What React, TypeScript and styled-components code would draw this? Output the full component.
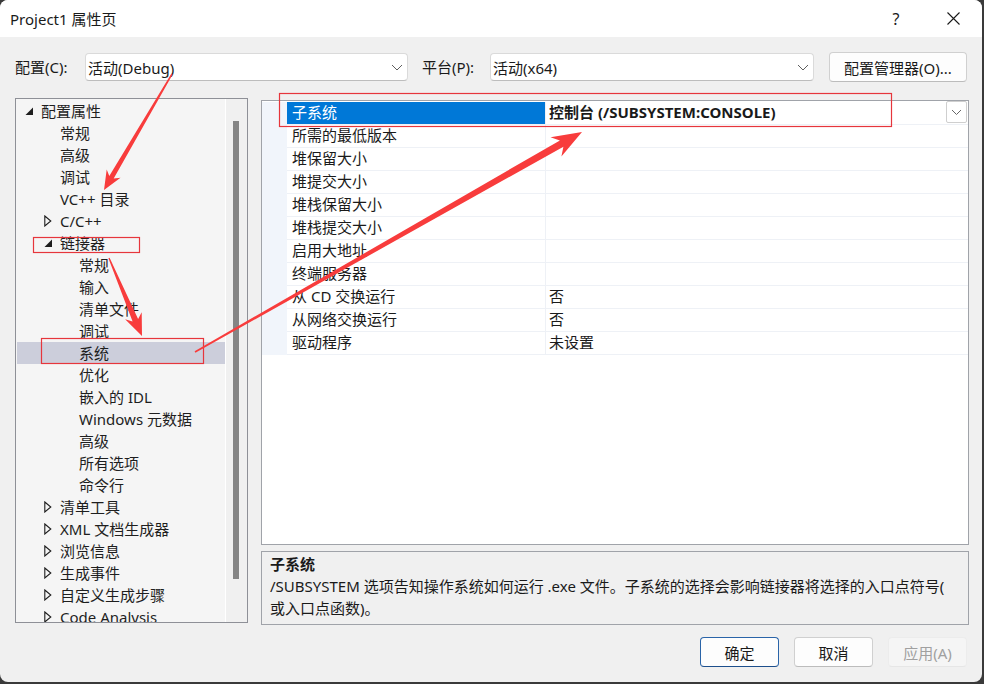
import React from "react";
import styled, { createGlobalStyle } from "styled-components";

const FONT = `"Noto Sans", "Noto Sans CJK SC", sans-serif`;

const Global = createGlobalStyle`
  html, body { margin: 0; padding: 0; background: #3a3a3a; }
  body { font-family: ${FONT}; width: 984px; height: 684px; overflow: hidden; color: #1a1a1a; }
  * { box-sizing: border-box; }
`;

const Window = styled.div`
  position: relative;
  width: 982px;
  height: 682px;
  background: #f0f0f0;
  border-radius: 8px;
  overflow: hidden;
  display: flex;
  flex-direction: column;
  font-size: 15px;
`;

const TitleBar = styled.div`
  height: 37px;
  flex: none;
  background: #ffffff;
  display: flex;
  align-items: center;
  padding-left: 10px;
  padding-right: 6px;
`;

const Title = styled.div`
  font-size: 15px;
  line-height: 20px;
  color: #1a1a1a;
`;

const TitleButtons = styled.div`
  margin-left: auto;
  display: flex;
  gap: 11px;
  height: 100%;
`;

const TitleButton = styled.div`
  width: 46px;
  height: 100%;
  display: flex;
  align-items: center;
  justify-content: center;
  font-size: 16px;
  color: #1a1a1a;
`;

const ConfigRow = styled.div`
  margin-top: 15px;
  height: 30px;
  flex: none;
  display: flex;
  align-items: center;
  padding: 0 15px;
`;

const Label = styled.div<{ $w: number }>`
  width: ${(p) => p.$w}px;
  flex: none;
  font-size: 15px;
  line-height: 20px;
`;

const Combo = styled.div<{ $w: number }>`
  width: ${(p) => p.$w}px;
  height: 28px;
  flex: none;
  background: #ffffff;
  border: 1px solid #dadada;
  border-bottom-color: #bdbdbd;
  border-radius: 4px;
  display: flex;
  align-items: center;
  justify-content: space-between;
  padding: 0 4px 0 2px;
  font-size: 15px;
`;

const Spacer = styled.div<{ $w: number }>`
  width: ${(p) => p.$w}px;
  flex: none;
`;

const Button = styled.div<{ $w: number; $primary?: boolean; $disabled?: boolean }>`
  width: ${(p) => p.$w}px;
  height: 30px;
  flex: none;
  display: flex;
  align-items: center;
  justify-content: center;
  border-radius: 4px;
  font-size: 15px;
  background: ${(p) => (p.$disabled ? "#f5f5f5" : "#fdfdfd")};
  color: ${(p) => (p.$disabled ? "#a0a0a0" : "#1a1a1a")};
  border: 1px solid
    ${(p) => (p.$primary ? "#2a64a8" : p.$disabled ? "#ececec" : "#d0d0d0")};
  border-bottom-color: ${(p) =>
    p.$primary ? "#1d4f8c" : p.$disabled ? "#e6e6e6" : "#bcbcbc"};
`;

const Main = styled.div`
  margin-top: 16px;
  height: 527px;
  flex: none;
  display: flex;
  gap: 13px;
  padding: 0 13px 0 15px;
`;

const TreePanel = styled.div`
  width: 233px;
  height: 525px;
  flex: none;
  border: 1px solid #8e9097;
  background: #f5f5f5;
  display: flex;
`;

const TreeList = styled.div`
  flex: 1;
  padding: 1px 0 0 1px;
  overflow: hidden;
`;

const TreeRow = styled.div<{ $level: number; $selected?: boolean }>`
  height: 22px;
  display: flex;
  align-items: center;
  padding-left: ${(p) => 8 + p.$level * 19}px;
  background: ${(p) => (p.$selected ? "#cccedb" : "transparent")};
  white-space: nowrap;
  font-size: 15px;
  line-height: 22px;
  color: #1e1e1e;
`;

const Expander = styled.div`
  width: 16px;
  height: 22px;
  flex: none;
  display: flex;
  align-items: center;
`;

const ScrollTrack = styled.div`
  width: 22px;
  flex: none;
  border-left: 1px solid #ffffff;
  background: #f0f0f0;
  padding: 22px 0 0 7px;
`;

const Thumb = styled.div`
  width: 6px;
  height: 458px;
  background: #858585;
`;

const RightCol = styled.div`
  flex: 1;
  display: flex;
  flex-direction: column;
  gap: 6px;
  padding-top: 2px;
`;

const GridPanel = styled.div`
  height: 445px;
  flex: none;
  border: 1px solid #a0a3a9;
  background: #ffffff;
  padding-top: 1px;
`;

const GridRow = styled.div`
  display: grid;
  grid-template-columns: 25px 259px 1fr;
  height: 23px;
`;

const Gutter = styled.div`
  background: #f1f5fb;
`;

const NameCell = styled.div<{ $selected?: boolean }>`
  border-bottom: 1px solid #eef1f6;
  border-right: 1px solid #eef1f6;
  padding: 0 0 2px 5px;
  display: flex;
  align-items: center;
  font-size: 15px;
  line-height: 20px;
  white-space: nowrap;
  background: ${(p) => (p.$selected ? "#0078d7" : "#ffffff")};
  color: ${(p) => (p.$selected ? "#ffffff" : "#1a1a1a")};
`;

const ValueCell = styled.div<{ $bold?: boolean }>`
  border-bottom: 1px solid #eef1f6;
  padding-left: 3px;
  display: flex;
  align-items: stretch;
  justify-content: space-between;
  font-size: 15px;
  line-height: 20px;
  white-space: nowrap;
  font-weight: ${(p) => (p.$bold ? 700 : 400)};
  color: #1a1a1a;
`;

const ValueText = styled.span`
  display: flex;
  align-items: center;
  padding-bottom: 2px;
`;

const DropButton = styled.div`
  width: 21px;
  height: 22px;
  margin-right: 1px;
  margin-top: -1px;
  border: 1px solid #cfcfcf;
  border-radius: 2px;
  background: #ffffff;
  display: flex;
  align-items: center;
  justify-content: center;
`;

const DescPanel = styled.div`
  height: 74px;
  flex: none;
  border: 1px solid #a0a3a9;
  background: #f0f0f0;
  padding: 2px 8px 0 8px;
`;

const DescTitle = styled.div`
  font-weight: 700;
  font-size: 15px;
  line-height: 21px;
`;

const DescLine = styled.div`
  font-size: 15px;
  line-height: 22px;
  white-space: nowrap;
`;

const Footer = styled.div`
  margin-top: 12px;
  height: 30px;
  flex: none;
  display: flex;
  justify-content: flex-end;
  gap: 15px;
  padding-right: 15px;
`;

const Overlay = styled.svg`
  position: absolute;
  left: 0;
  top: 0;
  width: 982px;
  height: 682px;
  pointer-events: none;
`;

const Chevron = ({ w = 10, h = 5, color = "#5f5f5f" }: { w?: number; h?: number; color?: string }) => (
  <svg width={w + 2} height={h + 2} viewBox={`0 0 ${w + 2} ${h + 2}`}>
    <polyline points={`1,1 ${w / 2 + 1},${h + 1} ${w + 1},1`} fill="none" stroke={color} strokeWidth="1" />
  </svg>
);

const ExpandedIcon = () => (
  <svg width="9" height="9" viewBox="0 0 9 9" style={{ marginTop: 1 }}>
    <polygon points="8,0.5 8,8 0.5,8" fill="#1e1e1e" />
  </svg>
);

const CollapsedIcon = () => (
  <svg width="8" height="12" viewBox="0 0 8 12">
    <polygon points="0.8,1 6.8,6 0.8,11" fill="none" stroke="#1e1e1e" strokeWidth="1.1" />
  </svg>
);

type TreeItem = { label: string; level: number; exp?: "open" | "closed"; selected?: boolean };

const tree: TreeItem[] = [
  { label: "配置属性", level: 0, exp: "open" },
  { label: "常规", level: 1 },
  { label: "高级", level: 1 },
  { label: "调试", level: 1 },
  { label: "VC++ 目录", level: 1 },
  { label: "C/C++", level: 1, exp: "closed" },
  { label: "链接器", level: 1, exp: "open" },
  { label: "常规", level: 2 },
  { label: "输入", level: 2 },
  { label: "清单文件", level: 2 },
  { label: "调试", level: 2 },
  { label: "系统", level: 2, selected: true },
  { label: "优化", level: 2 },
  { label: "嵌入的 IDL", level: 2 },
  { label: "Windows 元数据", level: 2 },
  { label: "高级", level: 2 },
  { label: "所有选项", level: 2 },
  { label: "命令行", level: 2 },
  { label: "清单工具", level: 1, exp: "closed" },
  { label: "XML 文档生成器", level: 1, exp: "closed" },
  { label: "浏览信息", level: 1, exp: "closed" },
  { label: "生成事件", level: 1, exp: "closed" },
  { label: "自定义生成步骤", level: 1, exp: "closed" },
  { label: "Code Analysis", level: 1, exp: "closed" },
];

type Prop = { name: string; value: string; selected?: boolean };

const props: Prop[] = [
  { name: "子系统", value: "控制台 (/SUBSYSTEM:CONSOLE)", selected: true },
  { name: "所需的最低版本", value: "" },
  { name: "堆保留大小", value: "" },
  { name: "堆提交大小", value: "" },
  { name: "堆栈保留大小", value: "" },
  { name: "堆栈提交大小", value: "" },
  { name: "启用大地址", value: "" },
  { name: "终端服务器", value: "" },
  { name: "从 CD 交换运行", value: "否" },
  { name: "从网络交换运行", value: "否" },
  { name: "驱动程序", value: "未设置" },
];

function arrowPoints(
  x1: number, y1: number, x2: number, y2: number,
  headLen: number, headHalf: number, w0: number, w1: number
): string {
  const dx = x2 - x1;
  const dy = y2 - y1;
  const L = Math.hypot(dx, dy);
  const ux = dx / L;
  const uy = dy / L;
  const nx = -uy;
  const ny = ux;
  const bx = x2 - ux * headLen;
  const by = y2 - uy * headLen;
  const jx = x2 - ux * headLen * 0.78;
  const jy = y2 - uy * headLen * 0.78;
  const pts: [number, number][] = [
    [x2, y2],
    [bx + nx * headHalf, by + ny * headHalf],
    [jx + nx * w1, jy + ny * w1],
    [x1 + nx * w0, y1 + ny * w0],
    [x1 - nx * w0, y1 - ny * w0],
    [jx - nx * w1, jy - ny * w1],
    [bx - nx * headHalf, by - ny * headHalf],
  ];
  return pts.map(([a, b]) => `${a.toFixed(1)},${b.toFixed(1)}`).join(" ");
}

const RED = "#f83c3c";
const BOX = "#e6363c";

export default function App() {
  return (
    <>
      <Global />
      <Window>
        <TitleBar>
          <Title>Project1 属性页</Title>
          <TitleButtons>
            <TitleButton>?</TitleButton>
            <TitleButton>
              <svg width="13" height="13" viewBox="0 0 13 13">
                <path d="M0.5 0.5 L12.5 12.5 M12.5 0.5 L0.5 12.5" stroke="#1a1a1a" strokeWidth="1.1" />
              </svg>
            </TitleButton>
          </TitleButtons>
        </TitleBar>

        <ConfigRow>
          <Label $w={70}>配置(C):</Label>
          <Combo $w={323}>
            <span>活动(Debug)</span>
            <Chevron />
          </Combo>
          <Spacer $w={14} />
          <Label $w={68}>平台(P):</Label>
          <Combo $w={324}>
            <span>活动(x64)</span>
            <Chevron />
          </Combo>
          <Spacer $w={15} />
          <Button $w={138}>配置管理器(O)...</Button>
        </ConfigRow>

        <Main>
          <TreePanel>
            <TreeList>
              {tree.map((t, i) => (
                <TreeRow key={i} $level={t.level} $selected={t.selected}>
                  <Expander>
                    {t.exp === "open" && <ExpandedIcon />}
                    {t.exp === "closed" && <CollapsedIcon />}
                  </Expander>
                  {t.label}
                </TreeRow>
              ))}
            </TreeList>
            <ScrollTrack>
              <Thumb />
            </ScrollTrack>
          </TreePanel>

          <RightCol>
            <GridPanel>
              {props.map((p, i) => (
                <GridRow key={i}>
                  <Gutter />
                  <NameCell $selected={p.selected}>{p.name}</NameCell>
                  <ValueCell $bold={p.selected}>
                    <ValueText>{p.value}</ValueText>
                    {p.selected && (
                      <DropButton>
                        <Chevron w={9} h={4.5} color="#666" />
                      </DropButton>
                    )}
                  </ValueCell>
                </GridRow>
              ))}
            </GridPanel>
            <DescPanel>
              <DescTitle>子系统</DescTitle>
              <DescLine>/SUBSYSTEM 选项告知操作系统如何运行 .exe 文件。子系统的选择会影响链接器将选择的入口点符号(</DescLine>
              <DescLine>或入口点函数)。</DescLine>
            </DescPanel>
          </RightCol>
        </Main>

        <Footer>
          <Button $w={79} $primary>确定</Button>
          <Button $w={79}>取消</Button>
          <Button $w={79} $disabled>应用(A)</Button>
        </Footer>

        <Overlay viewBox="0 0 982 682">
          <rect x="279.5" y="93.5" width="612" height="33" fill="none" stroke={BOX} strokeWidth="1.2" />
          <rect x="33.5" y="237.5" width="106" height="15" fill="none" stroke={BOX} strokeWidth="1.2" />
          <rect x="41.5" y="338.5" width="162" height="25" fill="none" stroke={BOX} strokeWidth="1.2" />
          <polygon points={arrowPoints(172, 74, 104, 190, 19, 8, 0.7, 2.6)} fill={RED} />
          <polygon points={arrowPoints(109, 258, 142, 336, 22, 9, 0.7, 3)} fill={RED} />
          <polygon points={arrowPoints(195, 352, 582, 132, 30, 11, 0.8, 3.6)} fill={RED} />
        </Overlay>
      </Window>
    </>
  );
}
